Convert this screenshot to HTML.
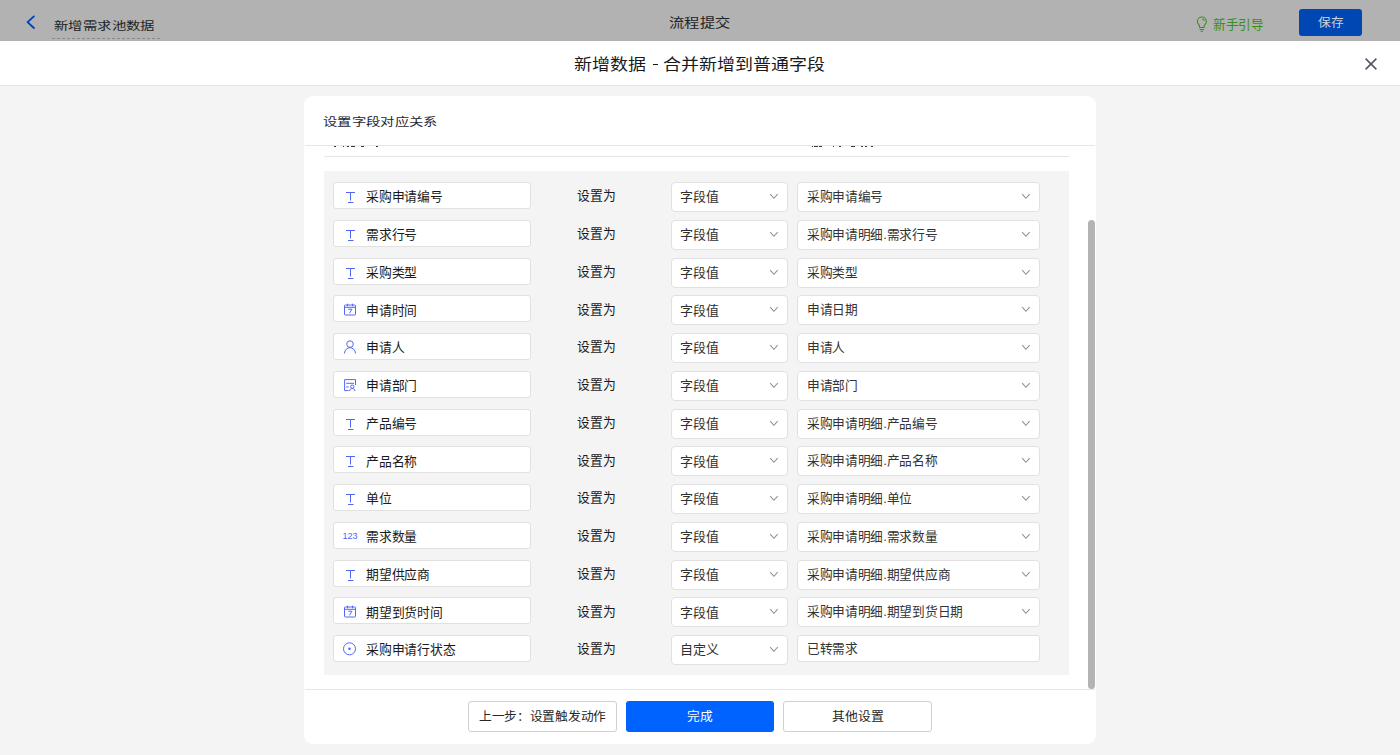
<!DOCTYPE html>
<html lang="zh-CN">
<head>
<meta charset="utf-8">
<title>新增数据</title>
<style>
*{box-sizing:border-box;margin:0;padding:0}
html,body{width:1400px;height:755px;overflow:hidden;background:#f4f4f4;font-family:"Liberation Sans",sans-serif;color:#262626}
body{position:relative}
.a{position:absolute}
.t{position:absolute;white-space:nowrap;line-height:20px;height:20px}
.box{position:absolute;background:#fff;border:1px solid #e1e1e1;border-radius:3px}
.r4{border-radius:4px}
.hline{position:absolute;height:1px;background:#e6e6e6}
.num{position:absolute;left:342.5px;font-size:9.2px;line-height:12px;color:#5367f7;letter-spacing:-0.05px;font-family:"Liberation Sans",sans-serif}
.btn{position:absolute;top:701px;height:31px;border-radius:3px}
</style>
</head>
<body>
<div class="a" style="left:0;top:0;width:1400px;height:41px;background:#b2b2b2"></div>
<svg class="a" style="left:22px;top:12px" width="18" height="20" viewBox="0 0 18 20"><path d="M11.9 4.4L5.6 10.1L11.9 16" stroke="#0043b6" stroke-width="1.9" stroke-linecap="round" stroke-linejoin="round" fill="none"/></svg>
<div class="t" style="left:53.72px;top:16.49px;font-size:14px;color:#1f1f1f;transform:scale(1.0286,0.8);transform-origin:0 9.51px;">新增需求池数据</div>
<div class="a" style="left:52px;top:38px;width:108px;height:1px;border-top:1px dashed #8a8a8a"></div>
<div class="t" style="left:669.09px;top:13.38px;font-size:15px;color:#232323;transform:scale(1.0200,0.84);transform-origin:0 9.47px;">流程提交</div>
<svg class="a" style="left:1194px;top:14px" width="16" height="20" viewBox="0 0 16 20"><path d="M5.6 13.5V12.3C5.6 11 3.3 10 3.3 7.5A4.55 4.55 0 0 1 12.4 7.5C12.4 10 10.1 11 10.1 12.3V13.5Z" stroke="#3b8f17" stroke-width="1.05" fill="none"/><path d="M5.6 15.4H10.1M6.6 17.3H9.1M8.3 4.9A2.7 2.7 0 0 1 10.4 7" stroke="#3b8f17" stroke-width="1.05" fill="none"/></svg>
<div class="t" style="left:1213.00px;top:15.31px;font-size:13px;color:#3b8f17;transform:scale(0.9692,1.0);transform-origin:0 9.54px;">新手引导</div>
<div class="a" style="left:1299px;top:9px;width:63px;height:27px;background:#0047b3;border-radius:3px"></div>
<div class="t" style="left:1317.74px;top:13.46px;font-size:13px;color:#ccd3de;transform:scale(0.9808,0.92);transform-origin:0 9.54px;">保存</div>
<div class="a" style="left:0;top:41px;width:1400px;height:45px;background:#fff;border-bottom:1px solid #e3e3e3"></div>
<div class="t" style="left:573.78px;top:55.23px;font-size:18px;color:#1a1a1a;transform:scale(1.0000,0.88);transform-origin:0 9.37px;">新增数据</div>
<div class="a" style="left:653px;top:63.5px;width:4.5px;height:1.3px;background:#1a1a1a"></div>
<div class="t" style="left:663.28px;top:55.23px;font-size:18px;color:#1a1a1a;transform:scale(1.0000,0.88);transform-origin:0 9.37px;">合并新增到普通字段</div>
<svg class="a" style="left:1361px;top:54px" width="20" height="20" viewBox="0 0 20 20"><path d="M4.6 4.6L15.4 15.4M15.4 4.6L4.6 15.4" stroke="#4d5562" stroke-width="1.5" fill="none"/></svg>
<div class="a" style="left:304px;top:96px;width:792px;height:648px;background:#fff;border-radius:9px"></div>
<div class="t" style="left:323.03px;top:112.49px;font-size:14px;color:#1f2633;transform:scale(1.0243,0.82);transform-origin:0 9.51px;">设置字段对应关系</div>
<div class="hline" style="left:305px;top:145px;width:790px"></div>
<div class="hline" style="left:324px;top:156px;width:745px"></div>
<div class="a" style="left:334.3px;top:146px;width:1.7px;height:1px;background:#3a3a3a"></div><div class="a" style="left:342.5px;top:146px;width:1.8px;height:1px;background:#3a3a3a"></div><div class="a" style="left:347.1px;top:146px;width:1.8px;height:1px;background:#3a3a3a"></div><div class="a" style="left:351.0px;top:146px;width:4.0px;height:1px;background:#3a3a3a"></div><div class="a" style="left:361.4px;top:146px;width:2.6px;height:1px;background:#3a3a3a"></div><div class="a" style="left:376.0px;top:146px;width:1.9px;height:1px;background:#3a3a3a"></div><div class="a" style="left:811.8px;top:146px;width:1.4px;height:1px;background:#3a3a3a"></div><div class="a" style="left:814.3px;top:146px;width:3.9px;height:1px;background:#3a3a3a"></div><div class="a" style="left:818.9px;top:146px;width:3.2px;height:1px;background:#3a3a3a"></div><div class="a" style="left:832.9px;top:146px;width:1.4px;height:1px;background:#3a3a3a"></div><div class="a" style="left:838.6px;top:146px;width:2.5px;height:1px;background:#3a3a3a"></div><div class="a" style="left:851.0px;top:146px;width:3.6px;height:1px;background:#3a3a3a"></div><div class="a" style="left:861.0px;top:146px;width:1.9px;height:1px;background:#3a3a3a"></div><div class="a" style="left:864.6px;top:146px;width:2.5px;height:1px;background:#3a3a3a"></div><div class="a" style="left:870.7px;top:146px;width:2.5px;height:1px;background:#3a3a3a"></div>
<div class="a" style="left:324px;top:171px;width:745px;height:504px;background:#f4f4f4"></div>
<div class="box" style="left:333px;top:182px;width:198px;height:27px"></div>
<svg class="a" style="left:340px;top:182px" width="20" height="27" viewBox="0 0 20 27"><path d="M6 10.5H15M10.5 10.5V18.5M8 20.5H13.5" stroke="#5367f7" stroke-width="1" fill="none"/></svg>
<div class="t" style="left:365.59px;top:187.36px;font-size:13px;color:#1a1a1a;transform:scale(0.9846,1.0);transform-origin:0 9.54px;">采购申请编号</div>
<div class="t" style="left:577.39px;top:186.46px;font-size:13px;color:#1a1a1a;transform:scale(0.9846,1.0);transform-origin:0 9.54px;">设置为</div>
<div class="box r4" style="left:671px;top:182px;width:117px;height:30px"></div>
<div class="t" style="left:680.48px;top:187.36px;font-size:13px;color:#303030;">字段值</div>
<svg class="a" style="left:768px;top:192px" width="12" height="9" viewBox="0 0 12 9"><path d="M2.2 2.2L5.9 6.3L9.7 2.2" stroke="#8e8e94" stroke-width="1.05" fill="none"/></svg>
<div class="box r4" style="left:797px;top:182px;width:243px;height:30px"></div>
<div class="t" style="left:806.59px;top:187.01px;font-size:13px;color:#333333;transform:scale(0.9769,1.0);transform-origin:0 9.54px;">采购申请编号</div>
<svg class="a" style="left:1020px;top:192px" width="12" height="9" viewBox="0 0 12 9"><path d="M2.2 2.2L5.9 6.3L9.7 2.2" stroke="#8e8e94" stroke-width="1.05" fill="none"/></svg>
<div class="box" style="left:333px;top:220px;width:198px;height:27px"></div>
<svg class="a" style="left:340px;top:220px" width="20" height="27" viewBox="0 0 20 27"><path d="M6 10.5H15M10.5 10.5V18.5M8 20.5H13.5" stroke="#5367f7" stroke-width="1" fill="none"/></svg>
<div class="t" style="left:365.59px;top:225.11px;font-size:13px;color:#1a1a1a;transform:scale(0.9846,1.0);transform-origin:0 9.54px;">需求行号</div>
<div class="t" style="left:577.39px;top:224.21px;font-size:13px;color:#1a1a1a;transform:scale(0.9846,1.0);transform-origin:0 9.54px;">设置为</div>
<div class="box r4" style="left:671px;top:220px;width:117px;height:30px"></div>
<div class="t" style="left:680.48px;top:225.11px;font-size:13px;color:#303030;">字段值</div>
<svg class="a" style="left:768px;top:230px" width="12" height="9" viewBox="0 0 12 9"><path d="M2.2 2.2L5.9 6.3L9.7 2.2" stroke="#8e8e94" stroke-width="1.05" fill="none"/></svg>
<div class="box r4" style="left:797px;top:220px;width:243px;height:30px"></div>
<div class="t" style="left:806.59px;top:224.76px;font-size:13px;color:#333333;transform:scale(0.9769,1.0);transform-origin:0 9.54px;">采购申请明细.需求行号</div>
<svg class="a" style="left:1020px;top:230px" width="12" height="9" viewBox="0 0 12 9"><path d="M2.2 2.2L5.9 6.3L9.7 2.2" stroke="#8e8e94" stroke-width="1.05" fill="none"/></svg>
<div class="box" style="left:333px;top:258px;width:198px;height:27px"></div>
<svg class="a" style="left:340px;top:258px" width="20" height="27" viewBox="0 0 20 27"><path d="M6 10.5H15M10.5 10.5V18.5M8 20.5H13.5" stroke="#5367f7" stroke-width="1" fill="none"/></svg>
<div class="t" style="left:365.59px;top:262.85px;font-size:13px;color:#1a1a1a;transform:scale(0.9846,1.0);transform-origin:0 9.54px;">采购类型</div>
<div class="t" style="left:577.39px;top:261.95px;font-size:13px;color:#1a1a1a;transform:scale(0.9846,1.0);transform-origin:0 9.54px;">设置为</div>
<div class="box r4" style="left:671px;top:258px;width:117px;height:30px"></div>
<div class="t" style="left:680.48px;top:262.85px;font-size:13px;color:#303030;">字段值</div>
<svg class="a" style="left:768px;top:268px" width="12" height="9" viewBox="0 0 12 9"><path d="M2.2 2.2L5.9 6.3L9.7 2.2" stroke="#8e8e94" stroke-width="1.05" fill="none"/></svg>
<div class="box r4" style="left:797px;top:258px;width:243px;height:30px"></div>
<div class="t" style="left:806.59px;top:262.50px;font-size:13px;color:#333333;transform:scale(0.9769,1.0);transform-origin:0 9.54px;">采购类型</div>
<svg class="a" style="left:1020px;top:268px" width="12" height="9" viewBox="0 0 12 9"><path d="M2.2 2.2L5.9 6.3L9.7 2.2" stroke="#8e8e94" stroke-width="1.05" fill="none"/></svg>
<div class="box" style="left:333px;top:295px;width:198px;height:27px"></div>
<svg class="a" style="left:340px;top:295px" width="20" height="27" viewBox="0 0 20 27"><rect x="4.5" y="10" width="11" height="10" rx="0.8" stroke="#5367f7" stroke-width="1" fill="none"/><path d="M4.5 12.3H15.5M7.5 8.7V11.3M12.5 8.7V11.3M8.2 14.2H11.9L9.5 18.3" stroke="#5367f7" stroke-width="1" fill="none"/></svg>
<div class="t" style="left:365.59px;top:300.60px;font-size:13px;color:#1a1a1a;transform:scale(0.9846,1.0);transform-origin:0 9.54px;">申请时间</div>
<div class="t" style="left:577.39px;top:299.70px;font-size:13px;color:#1a1a1a;transform:scale(0.9846,1.0);transform-origin:0 9.54px;">设置为</div>
<div class="box r4" style="left:671px;top:295px;width:117px;height:30px"></div>
<div class="t" style="left:680.48px;top:300.60px;font-size:13px;color:#303030;">字段值</div>
<svg class="a" style="left:768px;top:305px" width="12" height="9" viewBox="0 0 12 9"><path d="M2.2 2.2L5.9 6.3L9.7 2.2" stroke="#8e8e94" stroke-width="1.05" fill="none"/></svg>
<div class="box r4" style="left:797px;top:295px;width:243px;height:30px"></div>
<div class="t" style="left:806.59px;top:300.25px;font-size:13px;color:#333333;transform:scale(0.9769,1.0);transform-origin:0 9.54px;">申请日期</div>
<svg class="a" style="left:1020px;top:305px" width="12" height="9" viewBox="0 0 12 9"><path d="M2.2 2.2L5.9 6.3L9.7 2.2" stroke="#8e8e94" stroke-width="1.05" fill="none"/></svg>
<div class="box" style="left:333px;top:333px;width:198px;height:27px"></div>
<svg class="a" style="left:340px;top:333px" width="20" height="27" viewBox="0 0 20 27"><circle cx="10" cy="11.1" r="3.3" stroke="#5367f7" stroke-width="1" fill="none"/><path d="M4.4 20.5C4.7 16.8 7.2 14.7 10 14.7S15.3 16.8 15.6 20.5" stroke="#5367f7" stroke-width="1" fill="none"/></svg>
<div class="t" style="left:365.59px;top:338.35px;font-size:13px;color:#1a1a1a;transform:scale(0.9846,1.0);transform-origin:0 9.54px;">申请人</div>
<div class="t" style="left:577.39px;top:337.45px;font-size:13px;color:#1a1a1a;transform:scale(0.9846,1.0);transform-origin:0 9.54px;">设置为</div>
<div class="box r4" style="left:671px;top:333px;width:117px;height:30px"></div>
<div class="t" style="left:680.48px;top:338.35px;font-size:13px;color:#303030;">字段值</div>
<svg class="a" style="left:768px;top:343px" width="12" height="9" viewBox="0 0 12 9"><path d="M2.2 2.2L5.9 6.3L9.7 2.2" stroke="#8e8e94" stroke-width="1.05" fill="none"/></svg>
<div class="box r4" style="left:797px;top:333px;width:243px;height:30px"></div>
<div class="t" style="left:806.59px;top:338.00px;font-size:13px;color:#333333;transform:scale(0.9769,1.0);transform-origin:0 9.54px;">申请人</div>
<svg class="a" style="left:1020px;top:343px" width="12" height="9" viewBox="0 0 12 9"><path d="M2.2 2.2L5.9 6.3L9.7 2.2" stroke="#8e8e94" stroke-width="1.05" fill="none"/></svg>
<div class="box" style="left:333px;top:371px;width:198px;height:27px"></div>
<svg class="a" style="left:340px;top:371px" width="20" height="27" viewBox="0 0 20 27"><path d="M8.6 19.6H4.6V8.6H15.5V14" stroke="#5367f7" stroke-width="1" fill="none"/><path d="M6.2 12.3H14M6.2 16H8.6" stroke="#5367f7" stroke-width="1" fill="none"/><circle cx="12.3" cy="15.7" r="1.7" stroke="#5367f7" stroke-width="1" fill="none"/><path d="M9.6 20C9.8 18.3 10.8 17.5 12.3 17.5S14.8 18.3 15.1 20" stroke="#5367f7" stroke-width="1" fill="none"/></svg>
<div class="t" style="left:365.59px;top:376.10px;font-size:13px;color:#1a1a1a;transform:scale(0.9846,1.0);transform-origin:0 9.54px;">申请部门</div>
<div class="t" style="left:577.39px;top:375.20px;font-size:13px;color:#1a1a1a;transform:scale(0.9846,1.0);transform-origin:0 9.54px;">设置为</div>
<div class="box r4" style="left:671px;top:371px;width:117px;height:30px"></div>
<div class="t" style="left:680.48px;top:376.10px;font-size:13px;color:#303030;">字段值</div>
<svg class="a" style="left:768px;top:381px" width="12" height="9" viewBox="0 0 12 9"><path d="M2.2 2.2L5.9 6.3L9.7 2.2" stroke="#8e8e94" stroke-width="1.05" fill="none"/></svg>
<div class="box r4" style="left:797px;top:371px;width:243px;height:30px"></div>
<div class="t" style="left:806.59px;top:375.75px;font-size:13px;color:#333333;transform:scale(0.9769,1.0);transform-origin:0 9.54px;">申请部门</div>
<svg class="a" style="left:1020px;top:381px" width="12" height="9" viewBox="0 0 12 9"><path d="M2.2 2.2L5.9 6.3L9.7 2.2" stroke="#8e8e94" stroke-width="1.05" fill="none"/></svg>
<div class="box" style="left:333px;top:409px;width:198px;height:27px"></div>
<svg class="a" style="left:340px;top:409px" width="20" height="27" viewBox="0 0 20 27"><path d="M6 10.5H15M10.5 10.5V18.5M8 20.5H13.5" stroke="#5367f7" stroke-width="1" fill="none"/></svg>
<div class="t" style="left:365.59px;top:413.85px;font-size:13px;color:#1a1a1a;transform:scale(0.9846,1.0);transform-origin:0 9.54px;">产品编号</div>
<div class="t" style="left:577.39px;top:412.95px;font-size:13px;color:#1a1a1a;transform:scale(0.9846,1.0);transform-origin:0 9.54px;">设置为</div>
<div class="box r4" style="left:671px;top:409px;width:117px;height:30px"></div>
<div class="t" style="left:680.48px;top:413.85px;font-size:13px;color:#303030;">字段值</div>
<svg class="a" style="left:768px;top:419px" width="12" height="9" viewBox="0 0 12 9"><path d="M2.2 2.2L5.9 6.3L9.7 2.2" stroke="#8e8e94" stroke-width="1.05" fill="none"/></svg>
<div class="box r4" style="left:797px;top:409px;width:243px;height:30px"></div>
<div class="t" style="left:806.59px;top:413.50px;font-size:13px;color:#333333;transform:scale(0.9769,1.0);transform-origin:0 9.54px;">采购申请明细.产品编号</div>
<svg class="a" style="left:1020px;top:419px" width="12" height="9" viewBox="0 0 12 9"><path d="M2.2 2.2L5.9 6.3L9.7 2.2" stroke="#8e8e94" stroke-width="1.05" fill="none"/></svg>
<div class="box" style="left:333px;top:446px;width:198px;height:27px"></div>
<svg class="a" style="left:340px;top:446px" width="20" height="27" viewBox="0 0 20 27"><path d="M6 10.5H15M10.5 10.5V18.5M8 20.5H13.5" stroke="#5367f7" stroke-width="1" fill="none"/></svg>
<div class="t" style="left:365.59px;top:451.60px;font-size:13px;color:#1a1a1a;transform:scale(0.9846,1.0);transform-origin:0 9.54px;">产品名称</div>
<div class="t" style="left:577.39px;top:450.70px;font-size:13px;color:#1a1a1a;transform:scale(0.9846,1.0);transform-origin:0 9.54px;">设置为</div>
<div class="box r4" style="left:671px;top:446px;width:117px;height:30px"></div>
<div class="t" style="left:680.48px;top:451.60px;font-size:13px;color:#303030;">字段值</div>
<svg class="a" style="left:768px;top:456px" width="12" height="9" viewBox="0 0 12 9"><path d="M2.2 2.2L5.9 6.3L9.7 2.2" stroke="#8e8e94" stroke-width="1.05" fill="none"/></svg>
<div class="box r4" style="left:797px;top:446px;width:243px;height:30px"></div>
<div class="t" style="left:806.59px;top:451.25px;font-size:13px;color:#333333;transform:scale(0.9769,1.0);transform-origin:0 9.54px;">采购申请明细.产品名称</div>
<svg class="a" style="left:1020px;top:456px" width="12" height="9" viewBox="0 0 12 9"><path d="M2.2 2.2L5.9 6.3L9.7 2.2" stroke="#8e8e94" stroke-width="1.05" fill="none"/></svg>
<div class="box" style="left:333px;top:484px;width:198px;height:27px"></div>
<svg class="a" style="left:340px;top:484px" width="20" height="27" viewBox="0 0 20 27"><path d="M6 10.5H15M10.5 10.5V18.5M8 20.5H13.5" stroke="#5367f7" stroke-width="1" fill="none"/></svg>
<div class="t" style="left:365.59px;top:489.35px;font-size:13px;color:#1a1a1a;transform:scale(0.9846,1.0);transform-origin:0 9.54px;">单位</div>
<div class="t" style="left:577.39px;top:488.45px;font-size:13px;color:#1a1a1a;transform:scale(0.9846,1.0);transform-origin:0 9.54px;">设置为</div>
<div class="box r4" style="left:671px;top:484px;width:117px;height:30px"></div>
<div class="t" style="left:680.48px;top:489.35px;font-size:13px;color:#303030;">字段值</div>
<svg class="a" style="left:768px;top:494px" width="12" height="9" viewBox="0 0 12 9"><path d="M2.2 2.2L5.9 6.3L9.7 2.2" stroke="#8e8e94" stroke-width="1.05" fill="none"/></svg>
<div class="box r4" style="left:797px;top:484px;width:243px;height:30px"></div>
<div class="t" style="left:806.59px;top:489.00px;font-size:13px;color:#333333;transform:scale(0.9769,1.0);transform-origin:0 9.54px;">采购申请明细.单位</div>
<svg class="a" style="left:1020px;top:494px" width="12" height="9" viewBox="0 0 12 9"><path d="M2.2 2.2L5.9 6.3L9.7 2.2" stroke="#8e8e94" stroke-width="1.05" fill="none"/></svg>
<div class="box" style="left:333px;top:522px;width:198px;height:27px"></div>
<div class="num" style="top:530px">123</div>
<div class="t" style="left:365.59px;top:527.11px;font-size:13px;color:#1a1a1a;transform:scale(0.9846,1.0);transform-origin:0 9.54px;">需求数量</div>
<div class="t" style="left:577.39px;top:526.21px;font-size:13px;color:#1a1a1a;transform:scale(0.9846,1.0);transform-origin:0 9.54px;">设置为</div>
<div class="box r4" style="left:671px;top:522px;width:117px;height:30px"></div>
<div class="t" style="left:680.48px;top:527.11px;font-size:13px;color:#303030;">字段值</div>
<svg class="a" style="left:768px;top:532px" width="12" height="9" viewBox="0 0 12 9"><path d="M2.2 2.2L5.9 6.3L9.7 2.2" stroke="#8e8e94" stroke-width="1.05" fill="none"/></svg>
<div class="box r4" style="left:797px;top:522px;width:243px;height:30px"></div>
<div class="t" style="left:806.59px;top:526.75px;font-size:13px;color:#333333;transform:scale(0.9769,1.0);transform-origin:0 9.54px;">采购申请明细.需求数量</div>
<svg class="a" style="left:1020px;top:532px" width="12" height="9" viewBox="0 0 12 9"><path d="M2.2 2.2L5.9 6.3L9.7 2.2" stroke="#8e8e94" stroke-width="1.05" fill="none"/></svg>
<div class="box" style="left:333px;top:560px;width:198px;height:27px"></div>
<svg class="a" style="left:340px;top:560px" width="20" height="27" viewBox="0 0 20 27"><path d="M6 10.5H15M10.5 10.5V18.5M8 20.5H13.5" stroke="#5367f7" stroke-width="1" fill="none"/></svg>
<div class="t" style="left:365.59px;top:564.86px;font-size:13px;color:#1a1a1a;transform:scale(0.9846,1.0);transform-origin:0 9.54px;">期望供应商</div>
<div class="t" style="left:577.39px;top:563.96px;font-size:13px;color:#1a1a1a;transform:scale(0.9846,1.0);transform-origin:0 9.54px;">设置为</div>
<div class="box r4" style="left:671px;top:560px;width:117px;height:30px"></div>
<div class="t" style="left:680.48px;top:564.86px;font-size:13px;color:#303030;">字段值</div>
<svg class="a" style="left:768px;top:570px" width="12" height="9" viewBox="0 0 12 9"><path d="M2.2 2.2L5.9 6.3L9.7 2.2" stroke="#8e8e94" stroke-width="1.05" fill="none"/></svg>
<div class="box r4" style="left:797px;top:560px;width:243px;height:30px"></div>
<div class="t" style="left:806.59px;top:564.50px;font-size:13px;color:#333333;transform:scale(0.9769,1.0);transform-origin:0 9.54px;">采购申请明细.期望供应商</div>
<svg class="a" style="left:1020px;top:570px" width="12" height="9" viewBox="0 0 12 9"><path d="M2.2 2.2L5.9 6.3L9.7 2.2" stroke="#8e8e94" stroke-width="1.05" fill="none"/></svg>
<div class="box" style="left:333px;top:597px;width:198px;height:27px"></div>
<svg class="a" style="left:340px;top:597px" width="20" height="27" viewBox="0 0 20 27"><rect x="4.5" y="10" width="11" height="10" rx="0.8" stroke="#5367f7" stroke-width="1" fill="none"/><path d="M4.5 12.3H15.5M7.5 8.7V11.3M12.5 8.7V11.3M8.2 14.2H11.9L9.5 18.3" stroke="#5367f7" stroke-width="1" fill="none"/></svg>
<div class="t" style="left:365.59px;top:602.61px;font-size:13px;color:#1a1a1a;transform:scale(0.9846,1.0);transform-origin:0 9.54px;">期望到货时间</div>
<div class="t" style="left:577.39px;top:601.71px;font-size:13px;color:#1a1a1a;transform:scale(0.9846,1.0);transform-origin:0 9.54px;">设置为</div>
<div class="box r4" style="left:671px;top:597px;width:117px;height:30px"></div>
<div class="t" style="left:680.48px;top:602.61px;font-size:13px;color:#303030;">字段值</div>
<svg class="a" style="left:768px;top:607px" width="12" height="9" viewBox="0 0 12 9"><path d="M2.2 2.2L5.9 6.3L9.7 2.2" stroke="#8e8e94" stroke-width="1.05" fill="none"/></svg>
<div class="box r4" style="left:797px;top:597px;width:243px;height:30px"></div>
<div class="t" style="left:806.59px;top:602.25px;font-size:13px;color:#333333;transform:scale(0.9769,1.0);transform-origin:0 9.54px;">采购申请明细.期望到货日期</div>
<svg class="a" style="left:1020px;top:607px" width="12" height="9" viewBox="0 0 12 9"><path d="M2.2 2.2L5.9 6.3L9.7 2.2" stroke="#8e8e94" stroke-width="1.05" fill="none"/></svg>
<div class="box" style="left:333px;top:635px;width:198px;height:27px"></div>
<svg class="a" style="left:340px;top:635px" width="20" height="27" viewBox="0 0 20 27"><circle cx="9.5" cy="13.8" r="6" stroke="#5367f7" stroke-width="1" fill="none"/><circle cx="9.5" cy="13.8" r="1.3" fill="#5367f7"/></svg>
<div class="t" style="left:365.59px;top:640.36px;font-size:13px;color:#1a1a1a;transform:scale(0.9846,1.0);transform-origin:0 9.54px;">采购申请行状态</div>
<div class="t" style="left:577.39px;top:639.46px;font-size:13px;color:#1a1a1a;transform:scale(0.9846,1.0);transform-origin:0 9.54px;">设置为</div>
<div class="box r4" style="left:671px;top:635px;width:117px;height:30px"></div>
<div class="t" style="left:680.48px;top:640.36px;font-size:13px;color:#303030;">自定义</div>
<svg class="a" style="left:768px;top:645px" width="12" height="9" viewBox="0 0 12 9"><path d="M2.2 2.2L5.9 6.3L9.7 2.2" stroke="#8e8e94" stroke-width="1.05" fill="none"/></svg>
<div class="box" style="left:797px;top:635px;width:243px;height:27px"></div>
<div class="t" style="left:807.29px;top:639.41px;font-size:13px;color:#333333;transform:scale(0.9769,1.0);transform-origin:0 9.54px;">已转需求</div>
<div class="a" style="left:1088px;top:220px;width:7px;height:469px;background:#b3b3b3;border-radius:3.5px"></div>
<div class="hline" style="left:305px;top:689px;width:790px"></div>
<div class="btn" style="left:468px;width:149px;border:1px solid #d0d0d0;background:#fff"></div>
<div class="t" style="left:479.19px;top:707.06px;font-size:13px;color:#262626;transform:scale(0.9762,0.94);transform-origin:0 9.54px;">上一步：设置触发动作</div>
<div class="btn" style="left:626px;width:148px;background:#0062ff"></div>
<div class="t" style="left:687.29px;top:706.66px;font-size:13px;color:#ffffff;transform:scale(0.9769,0.94);transform-origin:0 9.54px;">完成</div>
<div class="btn" style="left:783px;width:149px;border:1px solid #d0d0d0;background:#fff"></div>
<div class="t" style="left:831.79px;top:707.16px;font-size:13px;color:#262626;transform:scale(0.9900,0.94);transform-origin:0 9.54px;">其他设置</div>
</body>
</html>
